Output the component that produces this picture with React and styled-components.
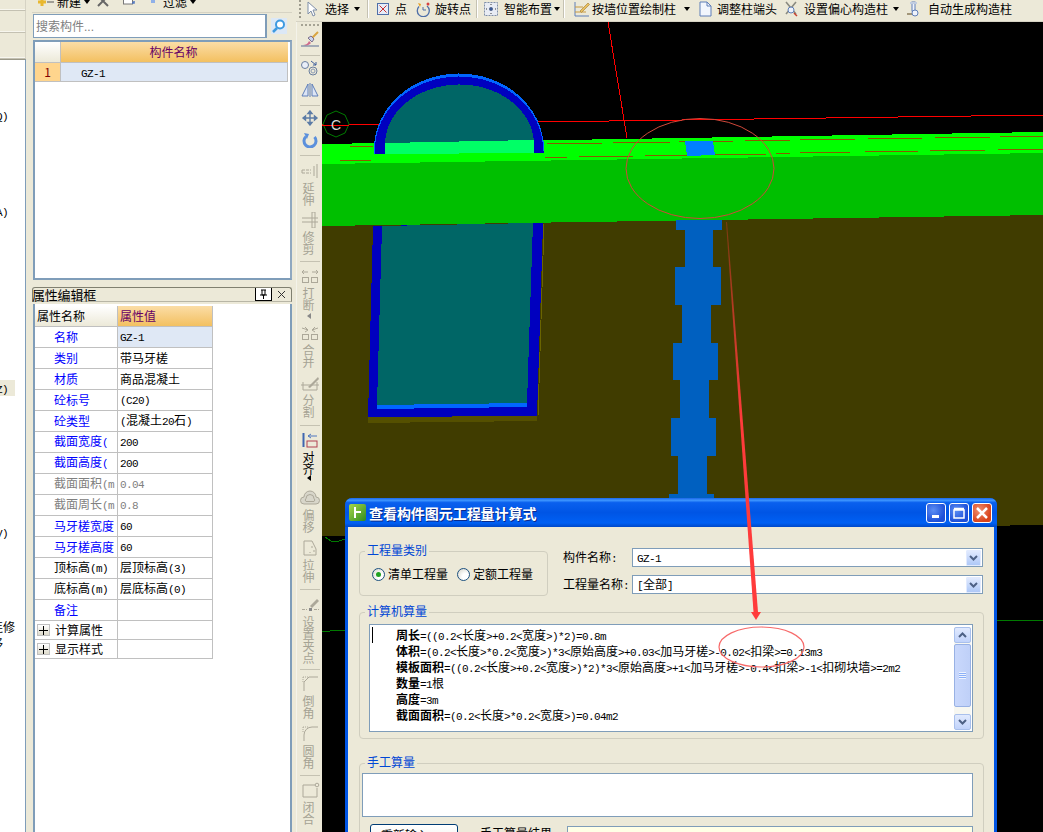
import React from 'react';
import styled, { createGlobalStyle } from 'styled-components';

const Global = createGlobalStyle`
  html, body { margin: 0; padding: 0; width: 1043px; height: 832px; overflow: hidden; background: #ECE9D8; }
  body { font: 12px/14px "Noto Sans CJK SC", "Liberation Sans", sans-serif; color: #000; }
  * { box-sizing: border-box; }
`;

const Page = styled.div`position: relative; display: flex; width: 1043px; height: 832px; overflow: hidden; background: #ECE9D8;`;

/* half-width latin run, as in the original bitmap font */
const Lat = styled.span`font-family: "Liberation Mono", monospace; font-size: 11px; letter-spacing: -0.6px;`;
const T = ({ children }) => (
  <span>
    {String(children).split(/([\u0000-\u007f]+)/).filter(Boolean).map((p, i) =>
      /^[\u0000-\u007f]+$/.test(p) ? <Lat key={i}>{p}</Lat> : <React.Fragment key={i}>{p}</React.Fragment>)}
  </span>
);

/* ---------- far-left navigation column ---------- */
const Nav = styled.div`width: 32px; flex: none; display: flex; flex-direction: column; padding-right: 6px;`;
const NavTab = styled.div`height: ${p => p.$h}px; flex: none; border-bottom: 1px solid #C4C1B2; border-right: 1px solid #D6D3C4; box-shadow: inset 0 -1px 0 #F7F6EE;`;
const NavList = styled.div`flex: 1; background: #fff; border-right: 1px solid #7F9DB9; border-top: 1px solid #9A9888; overflow: hidden; margin-top: 0;`;
const NavRow = styled.div`
  display: flex; justify-content: flex-end; height: 16px; line-height: 16px; white-space: nowrap;
  margin-top: ${p => p.$mt}px; width: ${p => p.$w}px; padding-right: ${p => p.$pr || 0}px;
  background: ${p => p.$sel ? '#ECE9D8' : 'transparent'};
`;

/* ---------- component panels ---------- */
const Panels = styled.div`width: 260px; flex: none; display: flex; flex-direction: column; margin-right: 4px;`;
const MiniBar = styled.div`height: 13px; flex: none; display: flex; align-items: flex-end; overflow: hidden; border-bottom: 1px solid #D6D3C4;`;
const MiniItem = styled.div`height: 20px; line-height: 20px; flex: none; margin-left: ${p => p.$ml}px; display: flex; align-items: center;`;
const SearchRow = styled.div`display: flex; align-items: center; height: 24px; margin: 1px 0 2px 1px;`;
const SearchBox = styled.div`width: 234px; height: 24px; background: #fff; border: 1px solid #7F9DB9; border-width: 1px 2px 1px 1px; padding: 0 2px; line-height: 22px; color: #808080;`;
const Dots = styled.span`font-family: "Liberation Sans", sans-serif;`;
const SearchBtn = styled.div`margin-left: 4px; width: 16px; height: 16px;`;
const GridFrame = styled.div`height: 240px; flex: none; margin-left: 1px; background: #fff; border: 2px solid #7F9DB9; border-right-color: #8FA8C0;`;
const GridRow = styled.div`display: flex; height: ${p => p.$h}px; border-bottom: 1px solid #C0C0C0;`;
const GridNo = styled.div`
  width: 26px; flex: none; border-right: 1px solid #C0C0C0; text-align: center; line-height: 17px; color: #800000;
  background: ${p => p.$head ? 'linear-gradient(#FFFFFF, #ECE9D8)' : '#FFD58D'};
`;
const GridHead = styled.div`flex: 1; text-align: center; line-height: 20px; color: #660066; background: linear-gradient(#FBDDA6, #F3C060); padding-right: 2px;`;
const GridCell = styled.div`flex: 1; background: #DFE8F5; padding-left: 20px; line-height: 17px; border-right: 1px solid #C0C0C0;`;
const GridInner = styled.div`padding: 0 1px 0 0; width: 254px;`;

const PropTitle = styled.div`
  height: 15px; margin-top: 7px; flex: none; display: flex; align-items: center;
  border: 1px solid #808070; border-bottom-color: #B8B6A6; border-radius: 3px 3px 0 0; font-size: 13px; line-height: 13px;
`;
const TitleText = styled.span`flex: 1; margin-left: -1px; letter-spacing: -0.2px;`;
const PinBox = styled.div`width: 17px; height: 13px; background: #fff; border: 1px solid #000; border-width: 0 1px 1px 1px; display: flex; align-items: center; justify-content: center;`;
const CloseX = styled.div`width: 19px; display: flex; justify-content: center;`;
const PropBody = styled.div`flex: 1; margin: 2px 0 0 1px; background: #fff; border: solid #7F9DB9; border-width: 0 2px 0 2px; padding-top: 2px;`;
const PropTable = styled.div`width: 178px;`;
const PropRow = styled.div`display: flex; height: ${p => p.$h || 21}px; border-bottom: 1px solid #C0C0C0;`;
const NameCell = styled.div`
  width: 83px; flex: none; border-right: 1px solid #C0C0C0; overflow: hidden; white-space: nowrap; display: flex; align-items: center;
  padding-left: ${p => p.$head ? 2 : p.$tree ? 2 : 19}px; color: ${p => p.$c || '#000'};
  background: ${p => p.$head ? 'linear-gradient(#FFFFFF, #ECE9D8)' : '#fff'};
`;
const ValCell = styled.div`
  flex: 1; border-right: 1px solid #C0C0C0; padding-left: 2px; overflow: hidden; white-space: nowrap; display: flex; align-items: center;
  color: ${p => p.$head ? '#660066' : p.$c || '#000'};
  background: ${p => p.$head ? 'linear-gradient(#FBDDA6, #F3C060)' : p.$sel ? '#DFE8F5' : '#fff'};
`;
const Plus = styled.span`
  width: 13px; height: 12px; flex: none; margin-right: 5px; border: 1px solid #C0C0C0; background: linear-gradient(#FFFFFF, #DEDBCB);
  display: flex; align-items: center; justify-content: center;
`;

/* ---------- right side ---------- */
const Right = styled.div`flex: 1; min-width: 0; display: flex; flex-direction: column;`;
const TopBar = styled.div`height: 22px; flex: none; display: flex; align-items: center; padding: 0 0 4px 3px; border-bottom: 1px solid #D6D3C4; white-space: nowrap;`;
const Grip = styled.div`width: 2px; height: 18px; background: repeating-linear-gradient(#9C9A8C 0 2px, transparent 2px 4px);`;
const TIcon = styled.div`width: 16px; height: 16px; flex: none; margin-left: ${p => p.$ml}px;`;
const TLabel = styled.span`flex: none; margin-left: ${p => p.$ml}px;`;
const TArrow = styled.span`flex: none; margin-left: ${p => p.$ml}px; width: 0; height: 0; border: 3.5px solid transparent; border-top: 4px solid #000; border-bottom: 0;`;
const TSep = styled.span`flex: none; width: 2px; height: 18px; margin-left: ${p => p.$ml}px; border-left: 1px solid #C5C2B2; border-right: 1px solid #fff;`;

const Work = styled.div`flex: 1; display: flex; min-height: 0;`;
const VBar = styled.div`width: 26px; flex: none; display: flex; flex-direction: column; align-items: center; border-left: 1px solid #F4F3EA; overflow: hidden;`;
const VGrip = styled.div`width: 18px; height: 6px; flex: none; background: repeating-linear-gradient(90deg, #A5A394 0 2px, transparent 2px 4px) 0 2px / 100% 2px no-repeat;`;
const VSep = styled.div`width: 20px; height: 1px; flex: none; margin-top: ${p => p.$mt}px; background: #C5C2B2;`;
const VIcon = styled.div`width: 20px; height: 16px; flex: none; margin-top: ${p => p.$mt}px;`;
const VText = styled.div`width: 12px; margin: 3px 2px 0 0; line-height: 12px; text-align: center; color: ${p => p.$on ? '#000' : '#A5A394'};`;
const VArrow = styled.div`flex: none; margin: ${p => p.$mt}px 2px 0 0; width: 0; height: 0; border: 3px solid transparent; border-right: 4px solid ${p => p.$on ? '#000' : '#888'}; border-left: 0;`;

const Canvas = styled.div`flex: 1; background: #000; overflow: hidden;`;
const Scene = styled.svg`display: block; width: 721px; height: 810px;`;
const Overlay = styled.svg`position: absolute; left: 0; top: 0; width: 1043px; height: 832px; pointer-events: none; z-index: 3;`;
const IconSvg = styled.svg`display: block; flex: none;`;

/* ---------- dialog window ---------- */
const Dialog = styled.div`
  position: absolute; left: 345px; top: 498px; width: 652px; height: 420px; z-index: 2;
  background: #0055E5; border-radius: 7px 7px 0 0; padding: 0 3px 3px; display: flex; flex-direction: column;
`;
const TitleBar = styled.div`
  height: 29px; flex: none; margin: 0 -3px; padding: 0 5px 0 4px; display: flex; align-items: center; border-radius: 7px 7px 0 0;
  background: linear-gradient(#1A66E8 0, #3D95FF 8%, #0A60EE 16%, #0055E5 50%, #0060F4 86%, #0048C8 100%);
`;
const AppIcon = styled.div`width: 17px; height: 17px; flex: none; border-radius: 2px; background: linear-gradient(135deg, #A8D84A, #2E8B1E);`;
const DlgTitle = styled.div`flex: 1; margin-left: 3px; color: #fff; font-weight: 700; font-size: 14px; text-shadow: 1px 1px 0 #0A2A8A; letter-spacing: -0.05px;`;
const WinBtn = styled.div`
  width: 20px; height: 20px; margin-left: 3px; flex: none; border: 1px solid #fff; border-radius: 3px; display: flex; align-items: center; justify-content: center;
  background: ${p => p.$close ? 'radial-gradient(circle at 35% 35%, #F09070, #D8431C 70%)' : 'radial-gradient(circle at 35% 35%, #5C8EF4, #1E50D8 70%)'};
`;
const DlgBody = styled.div`flex: 1; background: #ECE9D8; padding: 21px 10px 0 11px; min-height: 0;`;
const TopRow = styled.div`display: flex; align-items: flex-start;`;
const Group = styled.div`
  position: relative; flex: none; width: ${p => p.$w}px; height: ${p => p.$h}px; margin-top: ${p => p.$mt || 0}px;
  border: 1px solid #D0CEBF; border-radius: 4px;
`;
const Legend = styled.span`position: absolute; left: 5px; top: -9px; padding: 0 2px; background: #ECE9D8; color: #0046D5; line-height: 14px;`;
const RadioRow = styled.div`display: flex; align-items: center; margin: 15px 0 0 12px;`;
const Radio = styled.span`
  width: 13px; height: 13px; flex: none; border-radius: 50%; border: 1px solid #1C5180; display: flex; align-items: center; justify-content: center;
  background: radial-gradient(circle at 70% 70%, #fff 30%, #D4D2C6);
  &::after { content: ""; display: ${p => p.$on ? 'block' : 'none'}; width: 5px; height: 5px; border-radius: 50%; background: #21A121; }
`;
const RadioLabel = styled.span`margin: 0 9px 0 3px;`;
const FormCol = styled.div`margin-left: 15px; display: flex; flex-direction: column; gap: 8px;`;
const FormRow = styled.div`display: flex; align-items: center; height: 19px;`;
const FormLabel = styled.span`width: 69px; flex: none;`;
const Select = styled.div`width: 351px; height: 19px; background: #fff; border: 1px solid #7F9DB9; display: flex; align-items: center; justify-content: space-between; padding: 0 1px 0 4px;`;
const DropBtn = styled.span`
  width: 15px; height: 16px; flex: none; display: flex; align-items: center; justify-content: center; border: 1px solid #E1EAFE; border-radius: 1px;
  background: linear-gradient(#E1EAFE, #AEC8F7);
`;
const Editor = styled.div`margin: 11px 0 0 9px; width: 604px; height: 108px; background: #fff; border: 1px solid #7F9DB9; display: flex; position: relative;`;
const Caret = styled.span`position: absolute; left: 2px; top: 2px; width: 1px; height: 16px; background: #000;`;
const Lines = styled.div`flex: 1; padding: 2px 0 0 26px; white-space: nowrap; overflow: hidden;`;
const Line = styled.div`height: 16px; line-height: 15px;`;
const Bold = styled.b`font-weight: 700;`;
const Scroll = styled.div`width: 17px; flex: none; margin: 2px 1px 2px 0; display: flex; flex-direction: column; background: #F7F7F1;`;
const ScrollBtn = styled.div`
  height: 16px; flex: none; display: flex; align-items: center; justify-content: center; border: 1px solid #A9C0EC; border-radius: 2px;
  background: linear-gradient(#E1EAFE, #C1D3FB); margin-top: ${p => p.$mt || 0}px;
`;
const Thumb = styled.div`
  height: 63px; flex: none; display: flex; align-items: center; justify-content: center; margin-top: 1px; border: 1px solid #98B1E4; border-radius: 2px;
  background: linear-gradient(90deg, #C9D8FC, #BFD0F8);
`;
const Grab = styled.div`width: 7px; height: 7px; background: repeating-linear-gradient(#EEF3FE 0 1px, #8CB0F8 1px 2px);`;
const HandBox = styled.div`margin: 9px 0 0 2px; width: 611px; height: 44px; background: #fff; border: 1px solid #7F9DB9;`;
const Footer = styled.div`display: flex; align-items: flex-start; margin: 7px 0 0 10px;`;
const PushBtn = styled.div`
  width: 88px; height: 26px; flex: none; border: 1px solid #003C74; border-radius: 3px; text-align: center; line-height: 20px;
  background: linear-gradient(#fff, #F0F0EA 80%, #D6D0C5);
`;
const FootLabel = styled.span`margin: 2px 0 0 22px; width: 87px; flex: none;`;
const FootInput = styled.div`width: 406px; height: 24px; margin-top: 2px; background: #FFFFE6; border: 1px solid #7F9DB9;`;

/* ---------- icon drawings ---------- */
const Svg = ({ w = 20, h = 16, children }) => <IconSvg width={w} height={h} viewBox={`0 0 ${w} ${h}`} fill="none">{children}</IconSvg>;
const G = '#ACA899';

const vIcons = {
  brush: <><path d="M18 1 12 7" stroke="#D9A441" strokeWidth="2" /><path d="M8 7l3-2 3 3-2 3z" fill="#C9D5EE" stroke="#7F6F8A" /><path d="M3 14c2 0 5-1 6-4l2 2c-2 2-4 3-8 2z" fill="#D06A8C" /><path d="M1 15h18" stroke="#5A6F96" /></>,
  circles: <><circle cx="5" cy="5" r="3.5" fill="#E8EEF8" stroke="#6A7F9E" /><circle cx="13" cy="11" r="4" stroke="#6A7F9E" /><circle cx="13" cy="11" r="2" stroke="#8A9AB4" /><path d="M11 1l5 4M16 2v3h-3" stroke="#3F5F9A" /></>,
  mirror: <><path d="M10 1v14" stroke="#5F7FB8" /><path d="M8 2v12H2zM12 2v12h6z" fill="#DCE5F5" stroke="#5F7FB8" /></>,
  move: <path d="M10 1v14M3 8h14M10 1 8 3.5h4zM10 15l-2-2.500h4zM3 8l2.500-2v4zM17 8l-2.500-2v4z" stroke="#5C7CA6" strokeWidth="1.400" fill="#5C7CA6" />,
  rotate: <><path d="M14.500 5A6 6 0 1 1 6 4.500" stroke="#5B90DC" strokeWidth="3" /><path d="M4 1l5 1-2 5z" fill="#5B90DC" /></>,
  extend: <><path d="M17 1v14M14 3v10" stroke={G} /><path d="M2 7h9M2 10h9M2 7v3" stroke={G} strokeDasharray="3 1" /></>,
  trim: <><path d="M12 0v16M15 0v16M12 0h3M12 16h3" stroke={G} /><path d="M2 6h16M2 10h16" stroke={G} /></>,
  breakIcon: <><path d="M2 4h6M12 4h6M2 4l2-2M18 4l-2-2M2 4l2 2M18 4l-2 2" stroke={G} /><rect x="2.500" y="9.500" width="6" height="5" stroke={G} /><rect x="11.500" y="9.500" width="6" height="5" stroke={G} /></>,
  merge: <><path d="M2 3l6 2M18 3l-6 2M8 5 5 2M8 5 5 7M12 5l3-3M12 5l3 2" stroke={G} /><rect x="2.500" y="9.500" width="6" height="5" stroke={G} /><rect x="11.500" y="9.500" width="6" height="5" stroke={G} /></>,
  split: <><path d="M1 10h18M3 7v8M17 7v8M3 15h14" stroke={G} /><path d="M8 12 18 2l1 2-9 9z" fill={G} /></>,
  align: <><path d="M3.500 1v14" stroke="#3F66B0" strokeWidth="2" /><rect x="7" y="9" width="10" height="6" stroke="#B04050" /><path d="M8 4h9M8 4l3-2M8 4l3 2" stroke="#4F76C0" /></>,
  offset: <path d="M4 14a3.500 3.500 0 0 1 0-7 6 6 0 0 1 12 0 3.500 3.500 0 0 1 0 7zM6 11.500a2 2 0 0 1 0-3 4 4 0 0 1 8 0 2 2 0 0 1 0 3z" fill="#D8D6CA" stroke={G} />,
  stretch: <><path d="M4 1h8l4 8v6H4z" stroke={G} /><path d="M12 6v2M14 10v2M10 12v1" stroke={G} /></>,
  grip: <><path d="M10 9 17 2l2 2-7 7z" fill={G} /><rect x="9" y="11" width="3" height="3" fill="#888" /><path d="M2 12.500h5M14 12.500h5" stroke={G} strokeDasharray="3 1" /></>,
  chamfer: <><path d="M4 15V6L9 1h9" stroke={G} /><path d="M3 1h6M3 1v5" stroke={G} strokeDasharray="1 1" /></>,
  fillet: <><path d="M4 15V9a8 8 0 0 1 8-8h6" stroke={G} /><path d="M3 1h6M3 1v5" stroke={G} strokeDasharray="1 1" /></>,
  close: <><path d="M3 3h12M3 3v12h14V6" stroke={G} /><circle cx="17" cy="3" r="1.800" stroke={G} /></>,
};

const tIcons = {
  select: <path d="M5 1v12l3-3 2 5 2-1-2-5h4z" fill="#fff" stroke="#7F8FA8" />,
  point: <><rect x="2.500" y="2.500" width="11" height="11" fill="#E6ECF8" stroke="#4F6FA8" /><path d="M4.500 4.500l7 7M11.500 4.500l-7 7" stroke="#C83030" /></>,
  rotate: <><path d="M12 5a6 6 0 1 1-8 .5" stroke="#4F6FA8" strokeWidth="1.300" /><path d="M3 2l3 1-1 3z" fill="#E8A020" /><path d="M8 6v3h3" stroke="#4F6FA8" /><circle cx="13" cy="3" r="1.500" fill="#D84040" /></>,
  smart: <><rect x="1.500" y="1.500" width="13" height="13" fill="#E8ECF4" stroke="#7F8FA8" strokeDasharray="2 1" /><path d="M8 3v10M3 8h10" stroke="#3A3A3A" strokeDasharray="1 2" /><rect x="6.500" y="6.500" width="3" height="3" fill="#3A5A9A" /></>,
  wall: <><path d="M1 1v14h14" stroke="#5F7FB8" /><path d="M1 6h8M1 11h11" stroke="#C89A40" /><path d="M6 10 14 2l1.500 1.500-8 8z" fill="#E8C060" stroke="#A07830" strokeWidth=".6" /></>,
  page: <><path d="M3 1h7l4 4v10H3z" fill="#F2F6FD" stroke="#5F7FB8" /><path d="M10 1v4h4" stroke="#5F7FB8" /></>,
  wrench: <><path d="M3 1l10 12M13 1 3 13" stroke="#8A8A80" strokeWidth="1.600" /><circle cx="8" cy="9" r="3" fill="#EEF2FA" stroke="#5F7FB8" /><path d="M11 12l3 3" stroke="#C84030" strokeWidth="1.500" /></>,
  col: <><rect x="6" y="1" width="3" height="9" fill="#EEF2FA" stroke="#5F7FB8" /><rect x="4" y="1" width="7" height="2" fill="#C0CCE0" /><path d="M1 13h6" stroke="#8A7A5A" strokeWidth="1.500" /><circle cx="9" cy="12" r="3" fill="#EEF2FA" stroke="#5F7FB8" /></>,
};

const vItems = [
  { grip: true },
  { mt: 3, i: 'brush' },
  { sep: 8 },
  { mt: 4, i: 'circles' },
  { mt: 6, i: 'mirror' },
  { sep: 7 },
  { mt: 4, i: 'move' },
  { mt: 6, i: 'rotate' },
  { sep: 7 },
  { mt: 7, i: 'extend', t: '延伸' },
  { mt: 6, i: 'trim', t: '修剪' },
  { sep: 6 },
  { mt: 6, i: 'breakIcon', t: '打断', arrow: 2 },
  { mt: 6, i: 'merge', t: '合并' },
  { mt: 7, i: 'split', t: '分割' },
  { sep: 7 },
  { mt: 6, i: 'align', t: '对齐', on: true, arrow: 0 },
  { mt: 9, i: 'offset', t: '偏移' },
  { mt: 7, i: 'stretch', t: '拉伸' },
  { sep: 6 },
  { mt: 7, i: 'grip', t: '设置夹点' },
  { sep: 5 },
  { mt: 6, i: 'chamfer', t: '倒角' },
  { mt: 7, i: 'fillet', t: '圆角' },
  { sep: 6 },
  { mt: 6, i: 'close', t: '闭合' },
];

const topItems = [
  ['i', 'select', 2], ['l', '选择', 6], ['a', 5], ['s', 7],
  ['i', 'point', 6], ['l', '点', 4], ['i', 'rotate', 8], ['l', '旋转点', 4], ['s', 5],
  ['i', 'smart', 5], ['l', '智能布置', 5], ['a', 2], ['s', 3],
  ['i', 'wall', 9], ['l', '按墙位置绘制柱', 2], ['a', 8],
  ['i', 'page', 7], ['l', '调整柱端头', 4],
  ['i', 'wrench', 6], ['l', '设置偏心构造柱', 5], ['a', 5],
  ['i', 'col', 7], ['l', '自动生成构造柱', 6],
];

const BLUE = '#0000FF', GRAY = '#808080';
const props = [
  ['名称', 'GZ-1', BLUE, null, true],
  ['类别', '带马牙槎', BLUE],
  ['材质', '商品混凝土', BLUE],
  ['砼标号', ' (C20)', BLUE],
  ['砼类型', ' (混凝土20石)', BLUE],
  ['截面宽度(', '200', BLUE],
  ['截面高度(', '200', BLUE],
  ['截面面积(m', '0.04', GRAY, GRAY],
  ['截面周长(m', '0.8', GRAY, GRAY],
  ['马牙槎宽度', '60', BLUE],
  ['马牙槎高度', '60', BLUE],
  ['顶标高(m)', '层顶标高(3)'],
  ['底标高(m)', '层底标高(0)'],
  ['备注', '', BLUE],
];

const navRows = [
  { mt: 47, t: 'Q)', w: 8 },
  { mt: 80, t: 'A)', w: 8 },
  { mt: 161, t: 'Z)', w: 15, pr: 7, sel: true },
  { mt: 128, t: 'V)', w: 8 },
  { mt: 79, t: '连修', w: 15 },
  { mt: 0, t: '移', w: 3 },
];

const Chevron = ({ up }) => <Svg w={9} h={6}><path d={up ? 'M1 5l3.500-3.500L8 5' : 'M1 1l3.500 3.500L8 1'} stroke="#4D6185" strokeWidth="2" /></Svg>;

const poly = (x1, x2, y1, y2) => `${x1},${y1} ${x2},${y1} ${x2},${y2} ${x1},${y2}`;
const columnParts = [
  [676, 722, 220, 230], [685, 713, 230, 267], [675, 721, 267, 305], [682, 711, 305, 343],
  [673, 718, 343, 380], [680, 709, 380, 418], [671, 716, 418, 456], [678, 707, 456, 494], [669, 714, 494, 503],
];
const dashes = [
  [340, 371, 160.5], [350, 373, 146.5], [547, 602, 143.5], [613, 670, 142.5], [679, 733, 141.5], [745, 790, 140.5],
  [545, 567, 157.5], [579, 633, 156.5], [645, 698, 155.500], [715, 766, 154.5], [776, 790, 153.5],
  [800, 855, 139.5], [868, 922, 138.5], [935, 990, 137.5], [1000, 1043, 136.5],
  [800, 850, 152.5], [865, 918, 151.5], [930, 985, 150.5], [998, 1043, 149.5],
];

function Scenery() {
  return (
    <Scene viewBox="322 22 721 810" shapeRendering="crispEdges">
      <polygon points="322,226 1043,215 1043,525 322,536" fill="#403C00" />
      <polygon points="322,144 1043,132 1043,153 322,164" fill="#00FF00" />
      <polygon points="322,164 1043,153 1043,215 322,226" fill="#00BF00" />
      <path d="M322 125 L1043 115" stroke="#FF0000" />
      <path d="M608 22 L627 138" stroke="#FF0000" />
      {dashes.map(([a, b, y], i) => <path key={i} d={`M${a} ${y}H${b}`} stroke="#8A5A00" />)}
      {/* arched opening, upper part */}
      <path d="M374 154 L374 150 A85 76 0 0 1 544 149 L544 153 Z" fill="#0066FF" />
      <path d="M375 154 L375 150 A84 73 0 0 1 543 149 L544 153 Z" fill="#0000BF" />
      <path d="M385 146 A74.500 60 0 0 1 534 143 Z" fill="#006666" />
      <path d="M390 130 A72 44 0 0 1 528 127 L534 143 L385 146 Z" fill="#006666" />
      <polygon points="385,143 534,140 534,153 385,154" fill="#00FF66" />
      {/* lower part */}
      <polygon points="368,423 537,421 537,416 368,417" fill="#555000" />
      <polygon points="373,226 543,223 537,416 368,417" fill="#0000BF" />
      <polygon points="382,226 533,223 527,403 377,405" fill="#006666" />
      <polygon points="377,405 527,403 527,407 377,409" fill="#0066FF" />
      <path d="M544 224 L538 416" stroke="#6A6400" />
      {/* column */}
      <polygon points="685,141 713,141 715,155 687,156" fill="#0080FF" />
      {columnParts.map((c, i) => <polygon key={i} points={poly(...c)} fill="#0060C0" />)}
      {/* axis bubble */}
      <polygon points="336,111 345,115 349,124 345,133 336,137 327,133 323,124 327,115" stroke="#007A00" fill="#000" shapeRendering="auto" />
      <path d="M322 125 L349 125" stroke="#FF0000" />
      <text x="336" y="129.500" textAnchor="middle" fill="#D8D8D8" fontFamily="Liberation Sans, sans-serif" fontSize="14">C</text>
      {/* axis traces */}
      <path d="M325 537 L331 541 L336 542 L345 539" stroke="#007A00" fill="none" />
      <path d="M322 631 L330 631 L331 630 L345 630" stroke="#007A00" />
      <path d="M997 620.500 L1043 620.500" stroke="#007A00" />
    </Scene>
  );
}

export default function App() {
  return (
    <Page>
      <Global />
      <Nav>
        <NavTab $h={11} />
        <NavTab $h={22} />
        <NavTab $h={26} />
        <NavList>
          {navRows.map((r, i) => <NavRow key={i} $mt={r.mt} $w={r.w} $pr={r.pr} $sel={r.sel}><T>{r.t}</T></NavRow>)}
        </NavList>
      </Nav>

      <Panels>
        <MiniBar>
          <MiniItem $ml={5}><Svg w={20} h={12}><path d="M5 2v8M1 6h8" stroke="#E8B830" strokeWidth="3" /><path d="M10 6h7" stroke="#555" /></Svg></MiniItem>
          <MiniItem $ml={0}>新建</MiniItem>
          <MiniItem $ml={3}><TArrow $ml={0} /></MiniItem>
          <MiniItem $ml={7}><Svg w={12} h={12}><path d="M1 0l10 10M11 0 1 10" stroke="#666" strokeWidth="2" /></Svg></MiniItem>
          <MiniItem $ml={14}><Svg w={16} h={12}><rect x=".5" y="0" width="9" height="8" fill="#fff" stroke="#777" /><path d="M11 5v2H9" stroke="#4F76C0" strokeWidth="1.500" /></Svg></MiniItem>
          <MiniItem $ml={11}><Svg w={6} h={12}><rect x="1" y="0" width="4" height="7" fill="#8FB0E8" /></Svg></MiniItem>
          <MiniItem $ml={7}>过滤</MiniItem>
          <MiniItem $ml={3}><TArrow $ml={0} /></MiniItem>
        </MiniBar>
        <SearchRow>
          <SearchBox>搜索构件<Dots>...</Dots></SearchBox>
          <SearchBtn>
            <Svg w={16} h={16}><rect width="16" height="16" fill="#DCE8F6" /><circle cx="9" cy="6.500" r="4" stroke="#3E9AE0" strokeWidth="2" fill="#fff" /><path d="M6 10l-4 4" stroke="#3E9AE0" strokeWidth="2.500" /></Svg>
          </SearchBtn>
        </SearchRow>
        <GridFrame>
          <GridInner>
            <GridRow $h={21}>
              <GridNo $head />
              <GridHead>构件名称</GridHead>
            </GridRow>
            <GridRow $h={19}>
              <GridNo>1</GridNo>
              <GridCell><T>GZ-1</T></GridCell>
            </GridRow>
          </GridInner>
        </GridFrame>

        <PropTitle>
          <TitleText>属性编辑框</TitleText>
          <PinBox><Svg w={9} h={10}><path d="M2 1h5M3 1v5h3V1M1 6h7M4.500 6v4" stroke="#000" /></Svg></PinBox>
          <CloseX><Svg w={9} h={9}><path d="M1 1l7 7M8 1 1 8" stroke="#333" /></Svg></CloseX>
        </PropTitle>
        <PropBody>
          <PropTable>
            <PropRow>
              <NameCell $head>属性名称</NameCell>
              <ValCell $head>属性值</ValCell>
            </PropRow>
            {props.map(([n, v, c, vc, sel]) => (
              <PropRow key={n}>
                <NameCell $c={c}><T>{n}</T></NameCell>
                <ValCell $c={vc} $sel={sel}><T>{v}</T></ValCell>
              </PropRow>
            ))}
            {['计算属性', '显示样式'].map(n => (
              <PropRow key={n} $h={19}>
                <NameCell $tree>
                  <Plus><Svg w={9} h={9}><path d="M4.500 0v9M0 4.500h9" stroke="#000" /></Svg></Plus>
                  {n}
                </NameCell>
                <ValCell />
              </PropRow>
            ))}
          </PropTable>
        </PropBody>
      </Panels>

      <Right>
        <TopBar>
          <Grip />
          {topItems.map((it, i) => {
            if (it[0] === 'i') return <TIcon key={i} $ml={it[2]}><Svg w={16} h={16}>{tIcons[it[1]]}</Svg></TIcon>;
            if (it[0] === 'l') return <TLabel key={i} $ml={it[2]}>{it[1]}</TLabel>;
            if (it[0] === 'a') return <TArrow key={i} $ml={it[1]} />;
            return <TSep key={i} $ml={it[1]} />;
          })}
        </TopBar>
        <Work>
          <VBar>
            {vItems.map((it, i) => {
              if (it.grip) return <VGrip key={i} />;
              if (it.i === undefined) return <VSep key={i} $mt={it.sep} />;
              return (
                <React.Fragment key={i}>
                  <VIcon $mt={it.mt}><Svg>{vIcons[it.i]}</Svg></VIcon>
                  {it.t && <VText $on={it.on}>{it.t}</VText>}
                  {it.arrow !== undefined && <VArrow $mt={it.arrow} $on={it.on} />}
                </React.Fragment>
              );
            })}
          </VBar>
          <Canvas><Scenery /></Canvas>
        </Work>
      </Right>

      <Dialog>
        <TitleBar>
          <AppIcon><Svg w={17} h={17}><path d="M6 3v11M6 8h6" stroke="#fff" strokeWidth="2" /></Svg></AppIcon>
          <DlgTitle>查看构件图元工程量计算式</DlgTitle>
          <WinBtn><Svg w={12} h={12}><rect x="2" y="8" width="7" height="3" fill="#fff" /></Svg></WinBtn>
          <WinBtn><Svg w={14} h={14}><path d="M2 4h10v8H2zM2 2.500h10" stroke="#fff" strokeWidth="1.500" /></Svg></WinBtn>
          <WinBtn $close><Svg w={14} h={14}><path d="M2 2l10 10M12 2 2 12" stroke="#fff" strokeWidth="2.500" /></Svg></WinBtn>
        </TitleBar>
        <DlgBody>
          <TopRow>
            <Group $w={189} $h={45} $mt={3}>
              <Legend>工程量类别</Legend>
              <RadioRow>
                <Radio $on />
                <RadioLabel>清单工程量</RadioLabel>
                <Radio />
                <RadioLabel>定额工程量</RadioLabel>
              </RadioRow>
            </Group>
            <FormCol>
              <FormRow>
                <FormLabel>构件名称<Lat>:</Lat></FormLabel>
                <Select><T>GZ-1</T><DropBtn><Chevron /></DropBtn></Select>
              </FormRow>
              <FormRow>
                <FormLabel>工程量名称<Lat>:</Lat></FormLabel>
                <Select><T>[全部]</T><DropBtn><Chevron /></DropBtn></Select>
              </FormRow>
            </FormCol>
          </TopRow>
          <Group $w={625} $h={127} $mt={16}>
            <Legend>计算机算量</Legend>
            <Editor>
              <Caret />
              <Lines>
                <Line><Bold>周长</Bold><T>{'=((0.2<长度>+0.2<宽度>)*2)=0.8m'}</T></Line>
                <Line><Bold>体积</Bold><T>{'=(0.2<长度>*0.2<宽度>)*3<原始高度>+0.03<加马牙槎>-0.02<扣梁>=0.13m3'}</T></Line>
                <Line><Bold>模板面积</Bold><T>{'=((0.2<长度>+0.2<宽度>)*2)*3<原始高度>+1<加马牙槎>-0.4<扣梁>-1<扣砌块墙>=2m2'}</T></Line>
                <Line><Bold>数量</Bold><T>=1根</T></Line>
                <Line><Bold>高度</Bold><T>=3m</T></Line>
                <Line><Bold>截面面积</Bold><T>{'=(0.2<长度>*0.2<宽度>)=0.04m2'}</T></Line>
              </Lines>
              <Scroll>
                <ScrollBtn><Chevron up /></ScrollBtn>
                <Thumb><Grab /></Thumb>
                <ScrollBtn $mt={7}><Chevron /></ScrollBtn>
              </Scroll>
            </Editor>
          </Group>
          <Group $w={625} $h={100} $mt={24}>
            <Legend>手工算量</Legend>
            <HandBox />
            <Footer>
              <PushBtn>重新输入<Lat>(C)</Lat></PushBtn>
              <FootLabel>手工算量结果</FootLabel>
              <FootInput />
            </Footer>
          </Group>
        </DlgBody>
      </Dialog>

      <Overlay viewBox="0 0 1043 832">
        <defs>
          <linearGradient id="arrowFade" x1="0" y1="222" x2="0" y2="420" gradientUnits="userSpaceOnUse">
            <stop offset="0" stopColor="#7A3A10" />
            <stop offset="1" stopColor="#FF3B3B" />
          </linearGradient>
        </defs>
        <ellipse cx="700" cy="168.500" rx="74" ry="50" fill="none" stroke="#D0483A" />
        <polygon points="726,222 727,222 758,612 753.500,612" fill="url(#arrowFade)" />
        <polygon points="751,612 761,612 756,620" fill="#FF3B3B" />
        <ellipse cx="761.500" cy="647" rx="42.500" ry="20" fill="none" stroke="#F76A6A" strokeWidth="1.200" />
      </Overlay>
    </Page>
  );
}
